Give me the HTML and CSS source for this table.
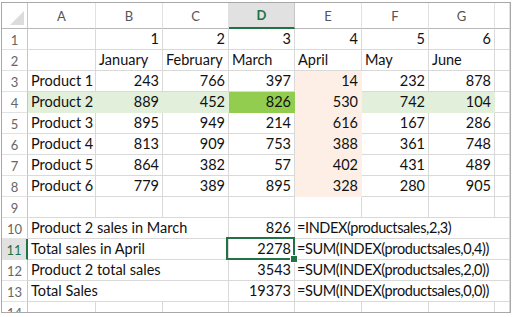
FILE: index.html
```html
<!DOCTYPE html>
<html>
<head>
<meta charset="utf-8">
<link rel="stylesheet" href="styles.css">
</head>
<body>
<div class="frame">
  <div class="sheet">
    <div class="c corner"></div>
    <div class="c h">A</div><div class="c h">B</div><div class="c h">C</div><div class="c h hsel">D</div><div class="c h">E</div><div class="c h">F</div><div class="c h">G</div><div class="c h"></div>

    <div class="c rh">1</div><div class="c"></div><div class="c r">1</div><div class="c r">2</div><div class="c r">3</div><div class="c r">4</div><div class="c r">5</div><div class="c r">6</div><div class="c"></div>

    <div class="c rh">2</div><div class="c"></div><div class="c">January</div><div class="c">February</div><div class="c">March</div><div class="c">April</div><div class="c">May</div><div class="c">June</div><div class="c"></div>

    <div class="c rh">3</div><div class="c">Product 1</div><div class="c r">243</div><div class="c r">766</div><div class="c r">397</div><div class="c r pe">14</div><div class="c r">232</div><div class="c r">878</div><div class="c"></div>

    <div class="c rh">4</div><div class="c lg">Product 2</div><div class="c r lg">889</div><div class="c r lg">452</div><div class="c r dg">826</div><div class="c r pe">530</div><div class="c r lg">742</div><div class="c r lg">104</div><div class="c"></div>

    <div class="c rh">5</div><div class="c">Product 3</div><div class="c r">895</div><div class="c r">949</div><div class="c r">214</div><div class="c r pe">616</div><div class="c r">167</div><div class="c r">286</div><div class="c"></div>

    <div class="c rh">6</div><div class="c">Product 4</div><div class="c r">813</div><div class="c r">909</div><div class="c r">753</div><div class="c r pe">388</div><div class="c r">361</div><div class="c r">748</div><div class="c"></div>

    <div class="c rh">7</div><div class="c">Product 5</div><div class="c r">864</div><div class="c r">382</div><div class="c r">57</div><div class="c r pe">402</div><div class="c r">431</div><div class="c r">489</div><div class="c"></div>

    <div class="c rh">8</div><div class="c">Product 6</div><div class="c r">779</div><div class="c r">389</div><div class="c r">895</div><div class="c r pe">328</div><div class="c r">280</div><div class="c r">905</div><div class="c"></div>

    <div class="c rh">9</div><div class="c"></div><div class="c"></div><div class="c"></div><div class="c"></div><div class="c"></div><div class="c"></div><div class="c"></div><div class="c"></div>

    <div class="c rh">10</div><div class="c span3">Product 2 sales in March</div><div class="c r">826</div><div class="c span4 fx">=INDEX(productsales,2,3)</div>

    <div class="c rh rhsel">11</div><div class="c span3">Total sales in April</div><div class="c r sel">2278</div><div class="c span4 fx">=SUM(INDEX(productsales,0,4))</div>

    <div class="c rh">12</div><div class="c span3">Product 2 total sales</div><div class="c r">3543</div><div class="c span4 fx">=SUM(INDEX(productsales,2,0))</div>

    <div class="c rh">13</div><div class="c span3">Total Sales</div><div class="c r">19373</div><div class="c span4 fx">=SUM(INDEX(productsales,0,0))</div>

    <div class="c rh">14</div><div class="c"></div><div class="c"></div><div class="c"></div><div class="c"></div><div class="c"></div><div class="c"></div><div class="c"></div><div class="c"></div>
  </div>
</div>
</body>
</html>
```
FILE: styles.css
```css
html, body {
  margin: 0;
  padding: 0;
  background: #fff;
}
.frame {
  margin: 2px 0 0 1px;
  width: 510px;
  height: 311px;
  border: 1px solid #a8a8a8;
  box-sizing: border-box;
  overflow: hidden;
  background: #fff;
}
.sheet {
  display: grid;
  grid-template-columns: 26px 68px 67px 66px 66px 67px 67px 66px 1fr;
  grid-template-rows: 26px repeat(14, 21px);
  font-family: Lato, "Open Sans", sans-serif;
  font-size: 14.5px;
  color: #111;
}
.c {
  box-sizing: border-box;
  border-right: 1px solid #d9d9d9;
  border-bottom: 1px solid #d9d9d9;
  padding: 0 3px;
  display: flex;
  align-items: flex-end;
  padding-bottom: 1px;
  white-space: nowrap;
  overflow: visible;
  line-height: 18px;
}
.r {
  justify-content: flex-end;
}
.fx {
  letter-spacing: -0.4px;
  padding-left: 2px;
}
.corner {
  position: relative;
  border-right: 1px solid #c6c6c6;
  border-bottom: 1px solid #b8b8b8;
}
.corner::after {
  content: "";
  position: absolute;
  right: 3px;
  bottom: 3px;
  width: 14px;
  height: 14px;
  background: #dcdcdc;
  clip-path: polygon(100% 0, 100% 100%, 0 100%);
}
.h {
  justify-content: center;
  align-items: center;
  padding: 0;
  color: #555;
  font-size: 13px;
  border-right: 1px solid #e2e2e2;
  border-bottom: 1px solid #b8b8b8;
}
.hsel {
  background: #e1e1e1;
  color: #217346;
  font-weight: bold;
  border-bottom: 2px solid #217346;
  border-right: 1px solid #c6c6c6;
}
.rh {
  justify-content: center;
  padding: 0;
  color: #666;
  font-size: 13px;
  border-right: 1px solid #c6c6c6;
  border-bottom: 1px solid #e2e2e2;
}
.rhsel {
  background: #e1e1e1;
  color: #217346;
  border-right: 2px solid #217346;
}
.lg {
  background: #e2efda;
  border-right-color: #e2efda;
  border-bottom-color: #e2efda;
}
.dg {
  background: #92cd50;
  border-right-color: #92cd50;
  border-bottom-color: #92cd50;
}
.pe {
  background: #fdeee6;
  border-right-color: #fdeee6;
  border-bottom-color: #fdeee6;
}
.span3 {
  grid-column: span 3;
}
.span4 {
  grid-column: span 4;
}
.sel {
  position: relative;
}
.sel::after {
  content: "";
  position: absolute;
  left: -3px;
  top: -2px;
  right: -1px;
  bottom: -1px;
  border: 2px solid #217346;
}
.sel::before {
  content: "";
  position: absolute;
  right: -4px;
  bottom: -4px;
  width: 6px;
  height: 6px;
  background: #217346;
  border: 1px solid #fff;
  z-index: 2;
}
```
